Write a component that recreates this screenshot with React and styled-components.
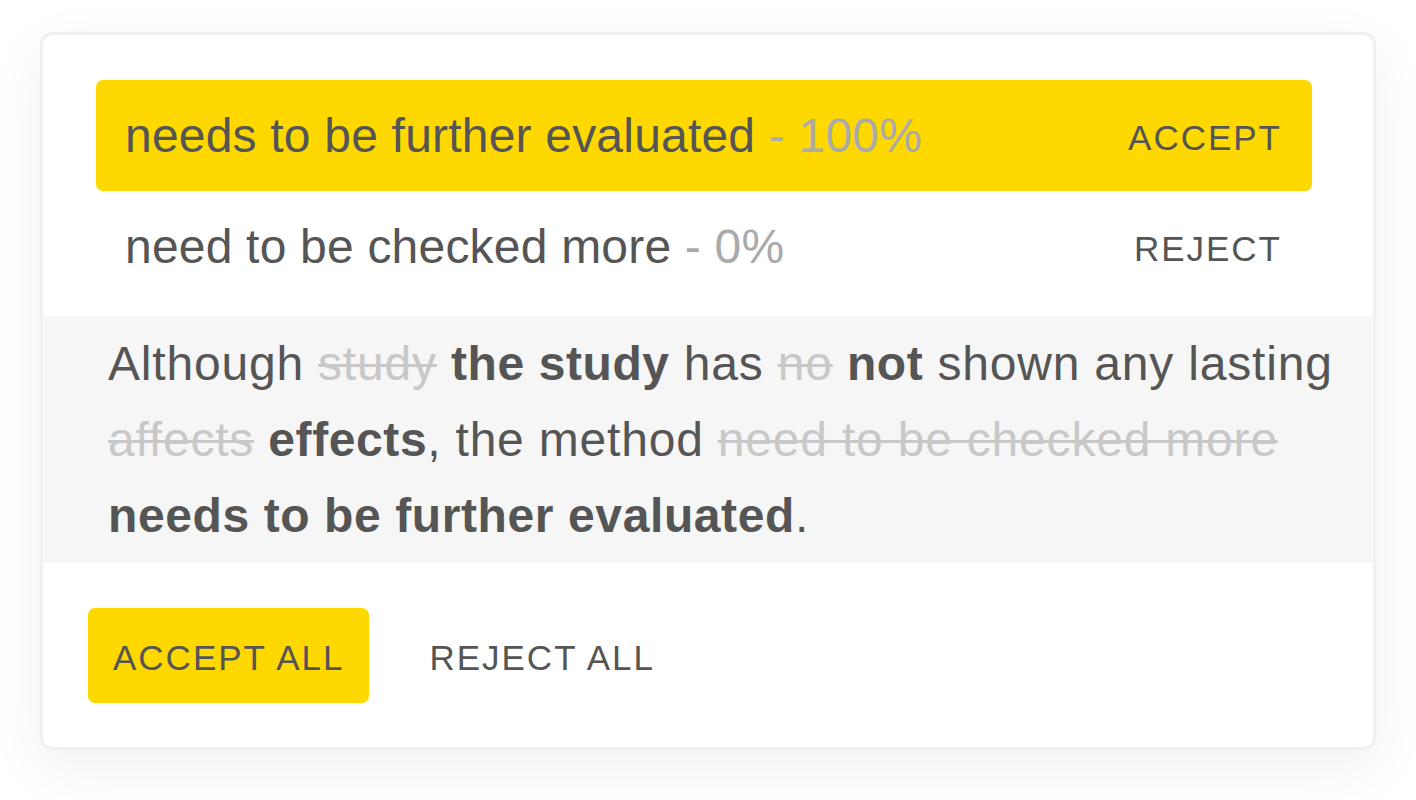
import styled, { createGlobalStyle } from "styled-components";

const GlobalStyle = createGlobalStyle`
  body {
    margin: 0;
    background: #ffffff;
    font-family: "Liberation Sans", Arial, sans-serif;
    color: #555555;
  }
`;

const Page = styled.div`
  min-height: 800px;
  padding: 32px 0 50px;
  box-sizing: border-box;
`;

const Card = styled.div`
  width: 1336px;
  box-sizing: border-box;
  margin: 0 auto;
  border: 3px solid #f0f0f0;
  border-radius: 12px;
  background: #ffffff;
  box-shadow: 0 18px 60px rgba(0, 0, 0, 0.06);
  overflow: hidden;
`;

const Suggestions = styled.div`
  display: flex;
  flex-direction: column;
  padding: 45px 61px 14px 53px;
`;

const Suggestion = styled.div`
  height: 111px;
  display: flex;
  align-items: center;
  justify-content: space-between;
  padding: 0 30px 0 29px;
  border-radius: 7px;
  background: ${(p) => (p.$active ? "#ffd800" : "transparent")};
`;

const Phrase = styled.span`
  font-size: 48px;
  letter-spacing: 0.2px;
  color: #555555;
`;

const Score = styled.span`
  color: #aaaaaa;
`;

const Action = styled.span`
  font-size: 35px;
  letter-spacing: 2px;
  color: #555555;
  padding-top: 4px;
`;

const Preview = styled.div`
  background: #f6f6f6;
  padding: 10px 20px 9px 65px;
  font-size: 48px;
  line-height: 76px;
  letter-spacing: 0.8px;
  color: #555555;
`;

const Removed = styled.span`
  color: #c8c8c8;
  text-decoration: line-through;
  text-decoration-thickness: 3px;
`;

const Added = styled.strong`
  font-weight: 700;
  letter-spacing: 0.6px;
`;

const Footer = styled.div`
  display: flex;
  align-items: center;
  gap: 35px;
  padding: 45px 45px 44px;
`;

const Button = styled.button`
  height: 95px;
  padding: 5px 25px 0;
  border: none;
  border-radius: 7px;
  background: ${(p) => (p.$primary ? "#ffd800" : "transparent")};
  font-family: "Liberation Sans", Arial, sans-serif;
  font-size: 35px;
  letter-spacing: 2px;
  color: #555555;
  cursor: pointer;
`;

const suggestions = [
  { text: "needs to be further evaluated", score: "100%", action: "ACCEPT", active: true },
  { text: "need to be checked more", score: "0%", action: "REJECT", active: false },
];

export default function App() {
  return (
    <Page>
      <GlobalStyle />
      <Card>
        <Suggestions>
          {suggestions.map((s) => (
            <Suggestion key={s.text} $active={s.active}>
              <Phrase>
                {s.text} <Score>- {s.score}</Score>
              </Phrase>
              <Action>{s.action}</Action>
            </Suggestion>
          ))}
        </Suggestions>
        <Preview>
          Although <Removed>study</Removed> <Added>the study</Added> has{" "}
          <Removed>no</Removed> <Added>not</Added> shown any lasting{" "}
          <Removed>affects</Removed> <Added>effects</Added>, the method{" "}
          <Removed>need to be checked more</Removed>{" "}
          <Added>needs to be further evaluated</Added>.
        </Preview>
        <Footer>
          <Button $primary>ACCEPT ALL</Button>
          <Button>REJECT ALL</Button>
        </Footer>
      </Card>
    </Page>
  );
}
